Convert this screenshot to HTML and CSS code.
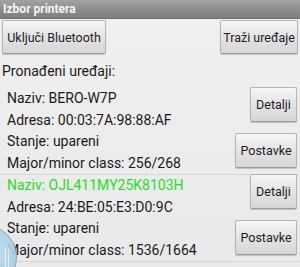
FILE: index.html
```html
<!DOCTYPE html>
<html>
<head>
<meta charset="utf-8">
<link rel="stylesheet" href="styles.css">
</head>
<body>
<div class="screen">
  <div class="titlebar">Izbor printera</div>
  <div class="toolbar">
    <button class="btn btn-top btn-bt">Uključi Bluetooth</button>
    <button class="btn btn-top btn-search">Traži uređaje</button>
  </div>
  <div class="found">Pronađeni uređaji:</div>
  <div class="device">
    <div class="info">
      <div class="line">Naziv: BERO-W7P</div>
      <div class="line">Adresa: 00:03:7A:98:88:AF</div>
      <div class="line">Stanje: upareni</div>
      <div class="line">Major/minor class: 256/268</div>
    </div>
    <div class="actions">
      <button class="btn btn-small btn-detail">Detalji</button>
      <button class="btn btn-small btn-settings">Postavke</button>
    </div>
  </div>
  <div class="device">
    <div class="info">
      <div class="line green">Naziv: OJL411MY25K8103H</div>
      <div class="line">Adresa: 24:BE:05:E3:D0:9C</div>
      <div class="line">Stanje: upareni</div>
      <div class="line">Major/minor class: 1536/1664</div>
    </div>
    <div class="actions">
      <button class="btn btn-small btn-detail">Detalji</button>
      <button class="btn btn-small btn-settings">Postavke</button>
    </div>
  </div>
  <div class="touch"><span class="streak s1"></span><span class="streak s2"></span></div>
</div>
</body>
</html>
```

FILE: styles.css
```css
* { box-sizing: border-box; }
html, body { margin: 0; padding: 0; }
body {
  width: 300px;
  height: 267px;
  overflow: hidden;
  font-family: Roboto, "Liberation Sans", sans-serif;
  background: #eeeeee;
}
.screen {
  position: relative;
  width: 300px;
  height: 267px;
  overflow: hidden;
  background: linear-gradient(#f0f0f0, #e9e9e9);
}
.titlebar {
  height: 19px;
  padding-left: 3px;
  line-height: 19px;
  font-size: 12px;
  font-weight: 700;
  color: #f4f4f4;
  background: linear-gradient(#a2a2a2, #8a8a8a 60%, #7e7e7e);
  border-bottom: 1px solid #6e6e6e;
}
.toolbar {
  display: flex;
  justify-content: space-between;
  padding: 1px 2px 0 2px;
}
.btn {
  font-family: Roboto, "Liberation Sans", sans-serif;
  font-size: 12.5px;
  color: #1e1e1e;
  white-space: nowrap;
  background: linear-gradient(#f5f5f5, #e4e4e4 50%, #d6d6d6);
  border: 1px solid #b4b4b4;
  border-bottom-color: #9a9a9a;
  border-radius: 2px;
  box-shadow: 0 1px 1px rgba(0,0,0,0.18);
  padding: 0;
  margin: 0;
}
.btn-top { height: 34px; }
.btn-bt { width: 104px; }
.btn-search { width: 78px; }
.found {
  margin-top: 6px;
  padding-left: 2px;
  font-size: 14px;
  line-height: 22px;
  color: #1a1a1a;
}
.device {
  display: flex;
  justify-content: space-between;
  border-bottom: 1px solid #d6d6d6;
}
.found + .device { margin-top: 6px; }
.info { padding-left: 7px; }
.line {
  font-size: 14px;
  line-height: 21.5px;
  color: #1a1a1a;
  white-space: nowrap;
}
.line.green { color: #22e022; }
.actions {
  display: flex;
  flex-direction: column;
  align-items: flex-end;
  gap: 11px;
  margin-top: -1px;
  padding-right: 3px;
}
.btn-small { height: 35px; }
.btn-detail { width: 47px; }
.btn-settings { width: 62px; }
.touch {
  position: absolute;
  left: -47px;
  top: 225px;
  width: 64px;
  height: 64px;
  border-radius: 50%;
  border: 1px solid #8d9aa4;
  background: radial-gradient(circle at 60% 40%, #c4e0f1, #a3cbe4 60%, #8fbcd8);
  opacity: 0.92;
}
.streak {
  position: absolute;
  top: 22px;
  width: 1px;
  height: 40px;
  background: rgba(255,255,255,0.7);
}
.s1 { left: 51px; }
.s2 { left: 54px; }
```
